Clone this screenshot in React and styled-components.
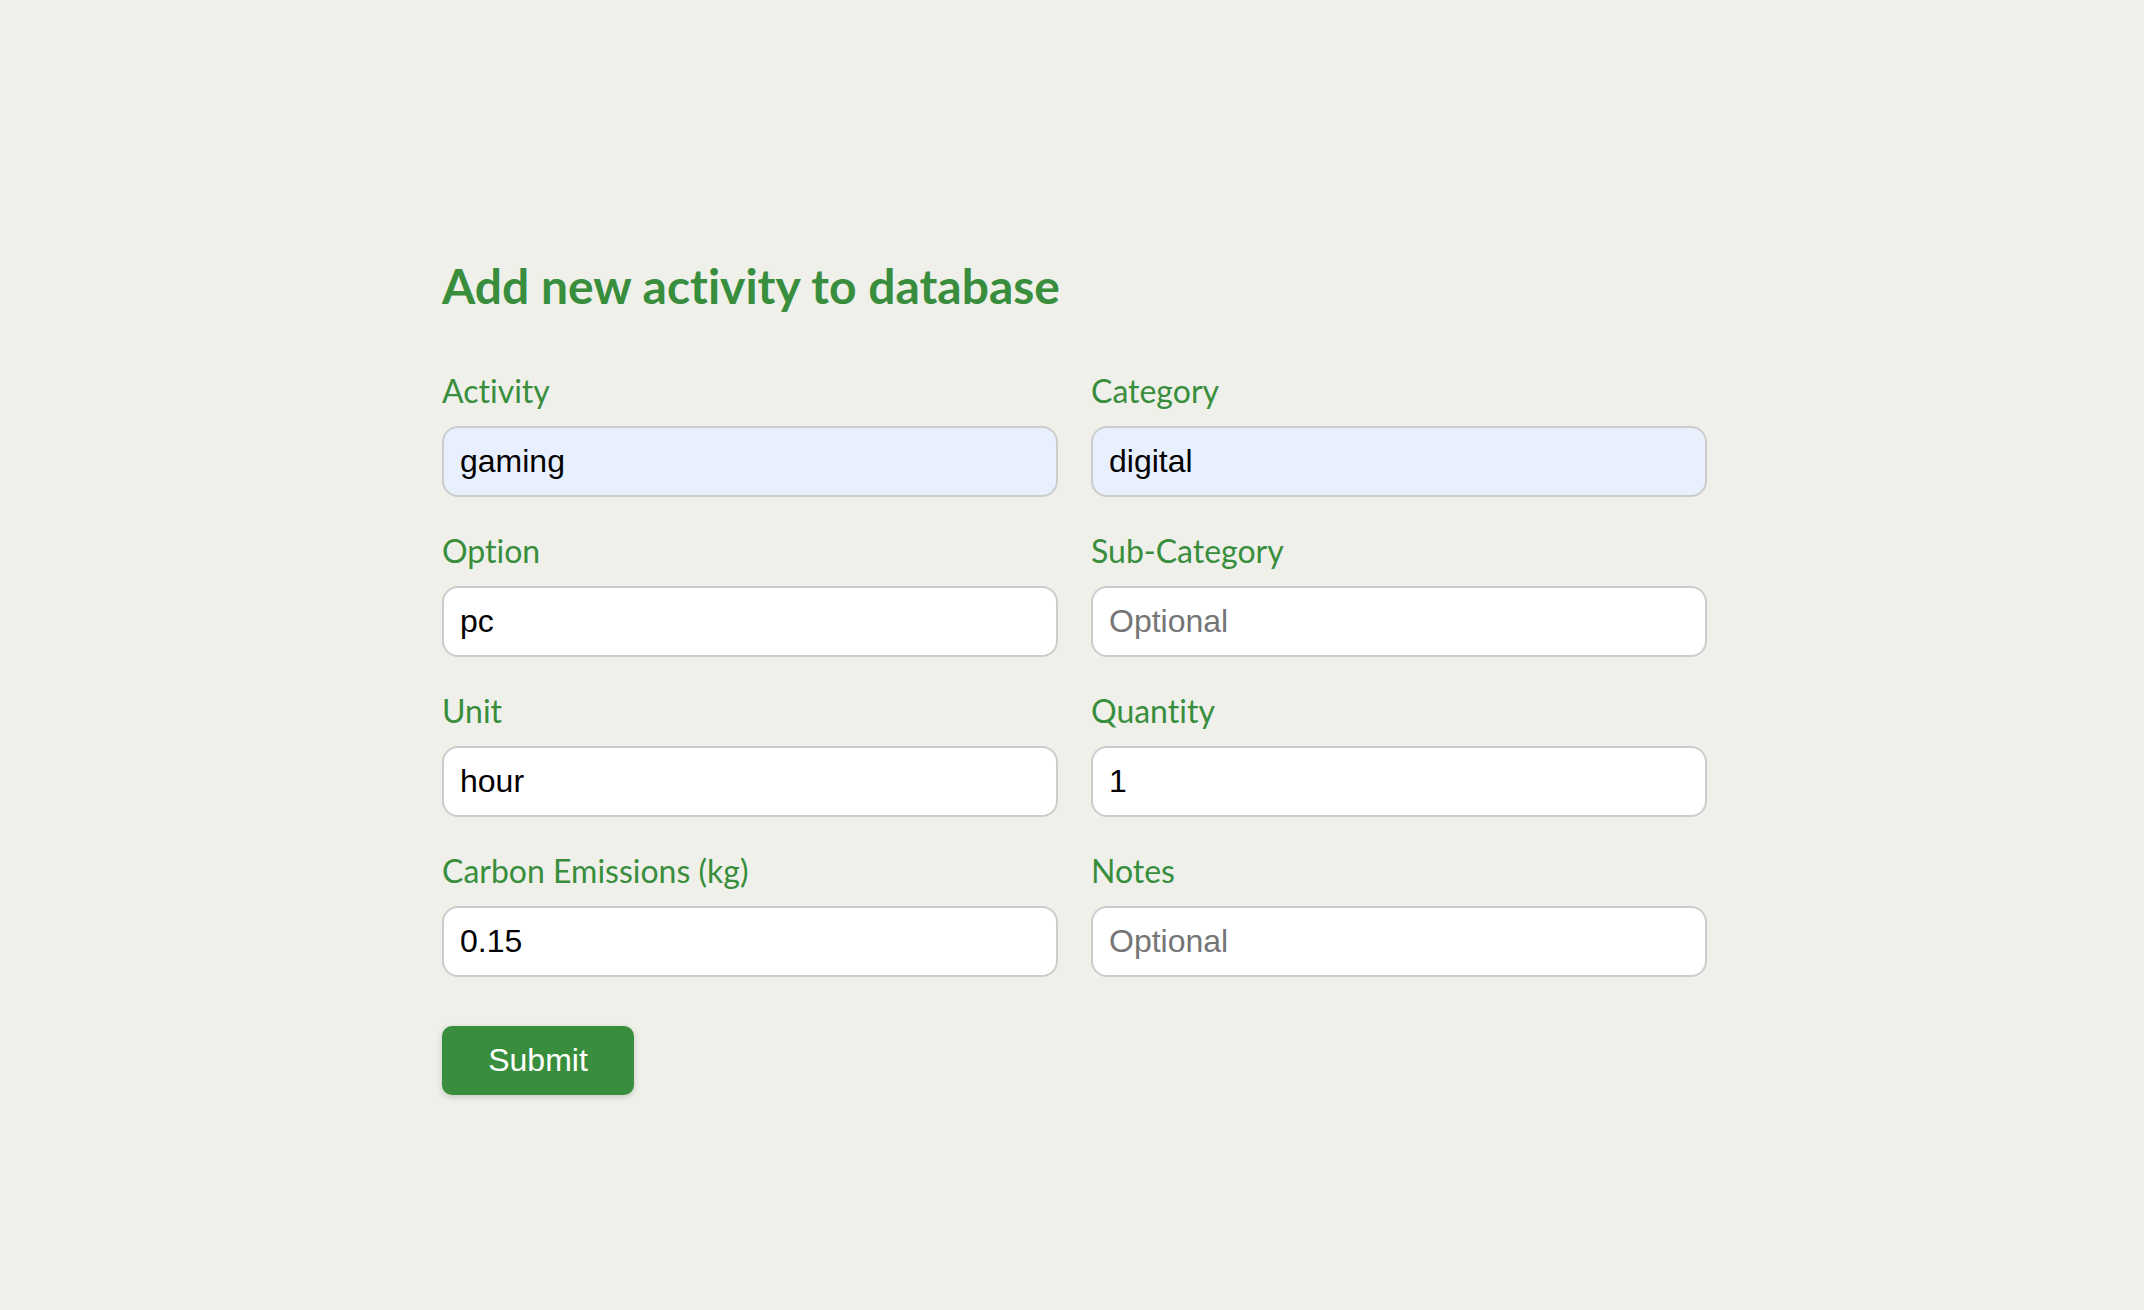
import React from 'react';
import styled, { createGlobalStyle } from 'styled-components';

const GlobalStyle = createGlobalStyle`
  html, body {
    margin: 0;
    padding: 0;
    background: #f0f0eb;
  }
  body {
    font-family: "Liberation Sans", Arial, sans-serif;
  }
`;

const Page = styled.main`
  min-height: 1310px;
  box-sizing: border-box;
  padding: 257px 0 0 442px;
`;

const Title = styled.h2`
  margin: 0 0 57px;
  font-family: Lato, "Noto Sans", sans-serif;
  font-weight: 700;
  font-size: 48px;
  line-height: 1.2;
  color: #388e3c;
  font-variant-ligatures: none;
  font-feature-settings: "liga" 0, "clig" 0;
`;

const Form = styled.form`
  width: 1264px;
`;

const Grid = styled.div`
  display: grid;
  grid-template-columns: 616px 616px;
  column-gap: 33px;
  row-gap: 35px;
`;

const Field = styled.div`
  display: flex;
  flex-direction: column;
`;

const Label = styled.label`
  font-family: Lato, "Noto Sans", sans-serif;
  font-size: 32px;
  line-height: 38px;
  color: #388e3c;
  margin-bottom: 16px;
  font-variant-ligatures: none;
  font-feature-settings: "liga" 0, "clig" 0;
`;

const Input = styled.input`
  box-sizing: border-box;
  width: 100%;
  height: 71px;
  padding: 0 16px;
  border: 2px solid #cccccc;
  border-radius: 16px;
  background: ${(p) => (p.$filled ? '#e8f0fe' : '#ffffff')};
  font-family: "Liberation Sans", Arial, sans-serif;
  font-size: 32px;
  color: #000;
  outline: none;

  &::placeholder {
    color: #757575;
  }
`;

const SubmitButton = styled.button`
  margin-top: 49px;
  width: 192px;
  height: 69px;
  border: none;
  border-radius: 10px;
  background: #388e3c;
  color: #fff;
  font-family: "Liberation Sans", Arial, sans-serif;
  font-size: 32px;
  box-shadow: 0 2px 6px rgba(0, 0, 0, 0.18);
  cursor: pointer;
`;

const fields = [
  { id: 'activity', label: 'Activity', value: 'gaming', filled: true },
  { id: 'category', label: 'Category', value: 'digital', filled: true },
  { id: 'option', label: 'Option', value: 'pc' },
  { id: 'subcategory', label: 'Sub-Category', placeholder: 'Optional' },
  { id: 'unit', label: 'Unit', value: 'hour' },
  { id: 'quantity', label: 'Quantity', value: '1' },
  { id: 'carbon', label: 'Carbon Emissions (kg)', value: '0.15' },
  { id: 'notes', label: 'Notes', placeholder: 'Optional' },
];

const App = () => {
  return (
    <>
      <GlobalStyle />
      <Page>
        <Title>Add new activity to database</Title>
        <Form onSubmit={(e) => e.preventDefault()}>
          <Grid>
            {fields.map((f) => (
              <Field key={f.id}>
                <Label htmlFor={f.id}>{f.label}</Label>
                <Input
                  id={f.id}
                  $filled={f.filled}
                  defaultValue={f.value}
                  placeholder={f.placeholder}
                />
              </Field>
            ))}
          </Grid>
          <SubmitButton type="submit">Submit</SubmitButton>
        </Form>
      </Page>
    </>
  );
};

export default App;
